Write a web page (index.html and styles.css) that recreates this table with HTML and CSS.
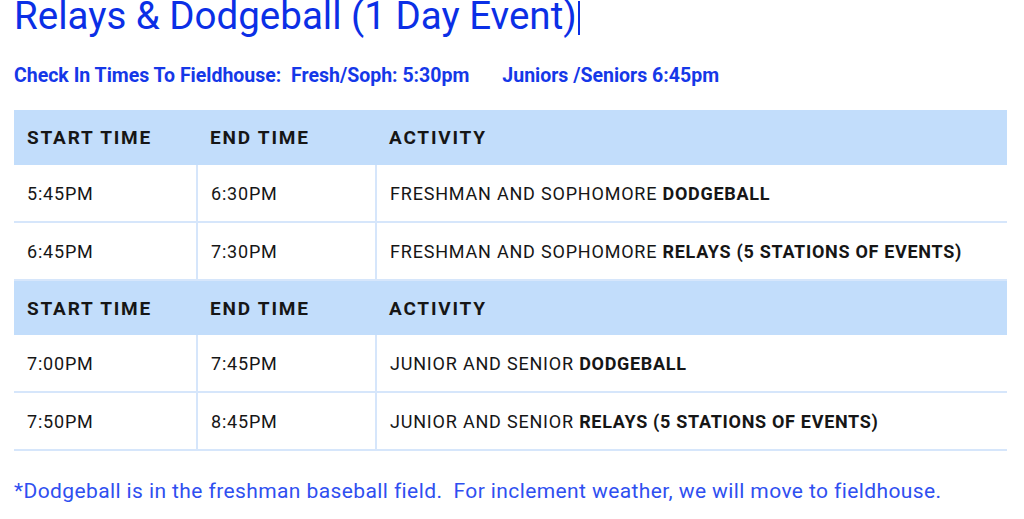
FILE: index.html
```html
<!DOCTYPE html>
<html>
<head>
<meta charset="utf-8">
<link rel="stylesheet" href="styles.css">
</head>
<body>
<div class="page">
  <h1 class="title">Relays &amp; Dodgeball (1 Day Event)<span class="caret"></span></h1>
  <p class="checkin">Check In Times To Fieldhouse:&nbsp; Fresh/Soph: 5:30pm<span class="gap"></span>Juniors /Seniors 6:45pm</p>
  <table class="sched">
    <colgroup><col class="c1"><col class="c2"><col class="c3"></colgroup>
    <tr class="head"><th>START TIME</th><th>END TIME</th><th>ACTIVITY</th></tr>
    <tr><td>5:45PM</td><td>6:30PM</td><td>FRESHMAN AND SOPHOMORE <b>DODGEBALL</b></td></tr>
    <tr><td>6:45PM</td><td>7:30PM</td><td>FRESHMAN AND SOPHOMORE <b>RELAYS (5 STATIONS OF EVENTS)</b></td></tr>
    <tr class="head head2"><th>START TIME</th><th>END TIME</th><th>ACTIVITY</th></tr>
    <tr><td>7:00PM</td><td>7:45PM</td><td>JUNIOR AND SENIOR <b>DODGEBALL</b></td></tr>
    <tr><td>7:50PM</td><td>8:45PM</td><td>JUNIOR AND SENIOR <b>RELAYS (5 STATIONS OF EVENTS)</b></td></tr>
  </table>
  <p class="note">*Dodgeball is in the freshman baseball field.&nbsp; For inclement weather, we will move to fieldhouse.</p>
</div>
</body>
</html>
```
FILE: styles.css
```css
html, body { margin: 0; padding: 0; background: #fff; }
body { font-family: "Roboto", "Liberation Sans", sans-serif; overflow: hidden; }
.page { padding: 0 17px 0 14px; }
.title {
  margin: -6px 0 0 0;
  font-weight: 400;
  font-size: 38.5px;
  line-height: 44px;
  color: #0b2fe6;
  letter-spacing: 0;
}
.caret { display: inline-block; width: 2px; height: 34px; background: #0b2fe6; vertical-align: -6px; margin-left: 1px; }
.checkin {
  margin: 26px 0 0 0;
  font-weight: 700;
  font-size: 19.5px;
  line-height: 24px;
  color: #1538e8;
}
.gap { display: inline-block; width: 33px; }
.sched {
  margin-top: 22px;
  width: 993px;
  border-collapse: collapse;
  table-layout: fixed;
}
.c1 { width: 183px; }
.c2 { width: 179px; }
.sched th, .sched td {
  text-align: left;
  padding: 0 0 0 13px;
  color: #161616;
}
.sched th {
  background: #c2ddfb;
  font-size: 19px;
  font-weight: 700;
  letter-spacing: 1.8px;
  height: 55px;
}
.sched .head2 th { height: 54px; }
.sched td {
  font-size: 18px;
  letter-spacing: 0.8px;
  height: 56px;
  border-bottom: 2px solid #d6e6fb;
  border-right: 2px solid #d6e6fb;
}
.sched td:last-child { border-right: none; }
.sched td b { font-weight: 700; letter-spacing: 0.7px; }
.note {
  margin: 27px 0 0 0;
  font-size: 21px;
  line-height: 26px;
  letter-spacing: 0.4px;
  color: #2f4ff0;
}
```
